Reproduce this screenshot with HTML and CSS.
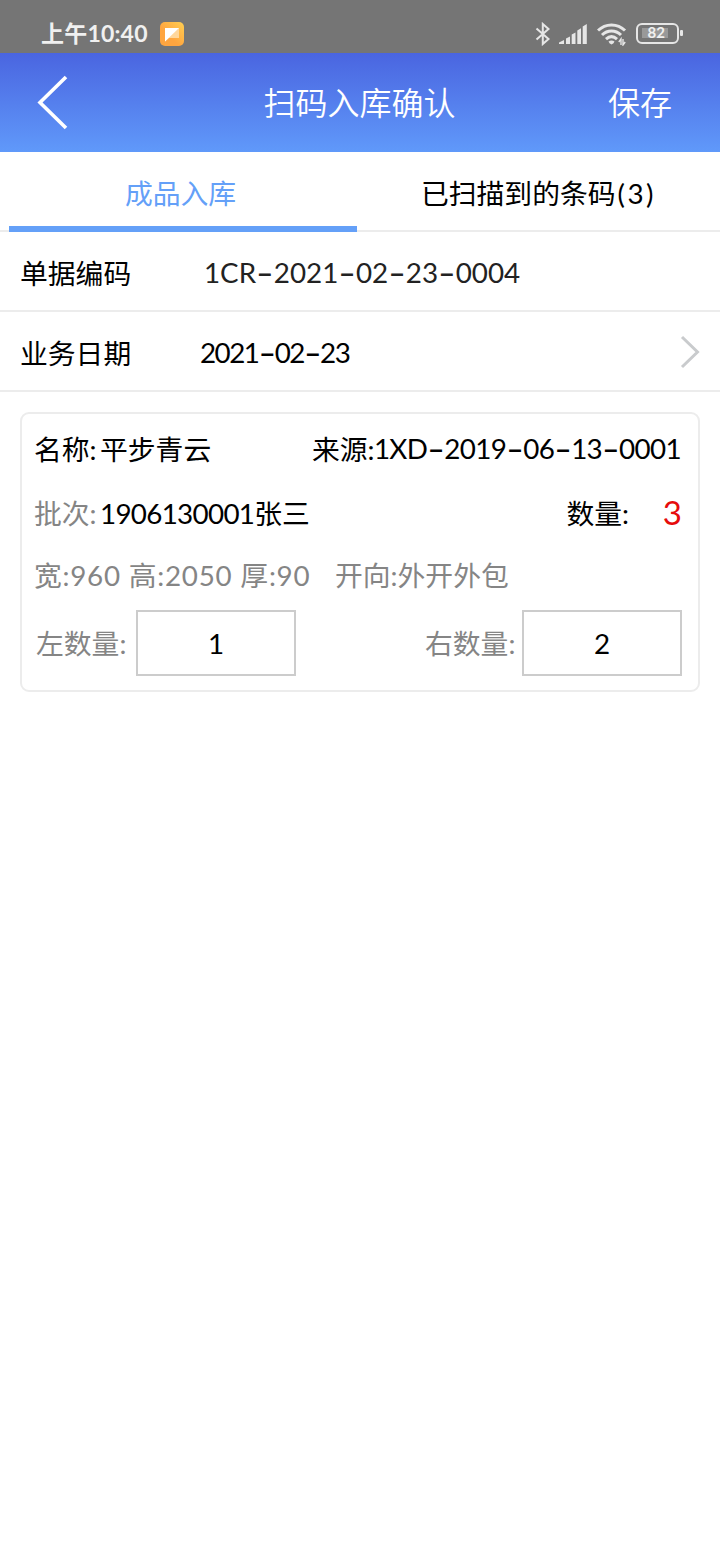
FILE: index.html
```html
<!DOCTYPE html>
<html lang="zh-CN">
<head>
    <meta charset="UTF-8">
    <meta name="viewport" content="width=device-width, initial-scale=1.0">
    <title>扫码入库确认</title>
    <link rel="stylesheet" href="styles.css">
</head>
<body>
    <div class="statusbar">
        <span class="clock">上午10:40</span>
        <svg class="app-icon" width="24" height="24" viewBox="0 0 24 24">
            <defs>
                <linearGradient id="orange" x1="0" y1="1" x2="1" y2="0">
                    <stop offset="0.4" stop-color="#ffa53f"/>
                    <stop offset="1" stop-color="#ffcf52"/>
                </linearGradient>
            </defs>
            <rect width="24" height="24" rx="5" fill="url(#orange)"/>
            <path d="M5 6H19V16H9L5 19.5Z" fill="#ffd79c"/>
            <path d="M5 6H19L5 19.5Z" fill="#fff"/>
        </svg>
        <div class="status-icons">
            <svg width="16" height="24" viewBox="0 0 16 24" fill="none" stroke="#e6e6e6" stroke-width="2">
                <path d="M1.500 6.500L13.500 17L7.800 22V2L13.500 7L1.500 17.500"/>
            </svg>
            <svg class="signal" width="28" height="20" viewBox="0 0 28 20" fill="#e6e6e6">
                <path d="M0 20V18.500L5 16V20ZM7 20V14.500L11 12.500V20ZM12.700 20V10.500L16.500 8.500V20ZM18.300 20V6.500L22 4.200V20ZM23.700 20V2.500L27.800 0V20Z"/>
            </svg>
            <svg class="wifi" width="30" height="24" viewBox="0 0 30 24" fill="none" stroke="#e6e6e6" stroke-width="3">
                <path d="M1 8.500C8.500 1 20.500 1 28 8.500"/>
                <path d="M5 13C10.500 7.700 18.500 7.700 24 13"/>
                <path d="M9 17.200C12.500 14 16.500 14 20 17.200"/>
                <path d="M11.500 19.500Q14.500 17.500 17.500 19.500Q17 21.500 14.500 22.500Q12 21.500 11.500 19.500Z" fill="#e6e6e6" stroke="none"/>
                <path d="M24 23V17L21.800 20M26 17V23L28.200 20" stroke-width="1.400"/>
            </svg>
            <div class="battery"><span>82</span></div>
        </div>
    </div>

    <div class="header">
        <svg class="back" width="32" height="56" viewBox="0 0 32 56" fill="none" stroke="#fff" stroke-width="3.600">
            <path d="M30 2L4 27.500L30 53"/>
        </svg>
        <span class="title">扫码入库确认</span>
        <span class="save">保存</span>
    </div>

    <div class="tabs">
        <div class="tab active">成品入库</div>
        <div class="tab">已扫描到的条码<span class="num">(3)</span></div>
    </div>

    <div class="row">
        <span class="row-label">单据编码</span>
        <span class="code">1CR<i>-</i>2021<i>-</i>02<i>-</i>23<i>-</i>0004</span>
    </div>
    <div class="row">
        <span class="row-label">业务日期</span>
        <span class="date">2021<i>-</i>02<i>-</i>23</span>
        <svg class="arrow" width="20" height="34" viewBox="0 0 20 34" fill="none" stroke="#c9cbcd" stroke-width="3">
            <path d="M2 2L17.500 17L2 32"/>
        </svg>
    </div>

    <div class="card">
        <div class="line">
            <span class="label">名称:</span>
            <span>平步青云</span>
            <span class="source">来源:</span>
            <span class="source-no">1XD<i>-</i>2019<i>-</i>06<i>-</i>13<i>-</i>0001</span>
        </div>
        <div class="line">
            <span class="label gray">批次:</span>
            <span><span class="batch">1906130001</span>张三</span>
            <span class="total">数量:</span>
            <span class="count">3</span>
        </div>
        <div class="line size gray">
            <span class="dims">宽:960 高:2050 厚:90</span>
            <span>开向:外开外包</span>
        </div>
        <div class="line inputs gray">
            <span class="left">左数量:</span>
            <input type="text" value="1">
            <span class="right">右数量:</span>
            <input type="text" value="2">
        </div>
    </div>
</body>
</html>
```
FILE: styles.css
```css
* {
    box-sizing: border-box;
}
body {
    margin: 0;
    min-height: 1560px;
    background-color: #fff;
    color: #000;
    font-family: Lato, "Noto Sans CJK SC", sans-serif;
    font-size: 27.8px;
    white-space: nowrap;
}
svg {
    display: block;
    flex: none;
}
.statusbar {
    display: flex;
    align-items: center;
    height: 53px;
    padding: 14px 37px 0 41px;
    background-color: #757575;
    color: #f0f0f0;
}
.clock {
    width: 119px;
    padding-bottom: 2px;
    font-size: 23px;
    font-weight: bold;
    letter-spacing: 0.2px;
    line-height: 36px;
}
.status-icons {
    display: flex;
    align-items: center;
    margin-left: auto;
}
.signal {
    margin-left: 8px;
}
.wifi {
    margin-left: 10px;
}
.battery {
    position: relative;
    width: 43px;
    height: 21px;
    margin: 0 4px 0 9px;
    padding: 3px 4px;
    border: 2.5px solid #e6e6e6;
    border-radius: 6px;
}
.battery span {
    display: block;
    width: 26px;
    height: 10px;
    background-color: #999;
    color: #f0f0f0;
    font-size: 15px;
    font-weight: bold;
    line-height: 9px;
    text-align: right;
    padding-right: 3px;
}
.battery::after {
    content: "";
    position: absolute;
    right: -6px;
    top: 5px;
    width: 3px;
    height: 6px;
    border-radius: 1px;
    background-color: #e6e6e6;
}
.header {
    display: grid;
    grid-template-columns: 1fr auto 1fr;
    align-items: center;
    height: 99px;
    padding: 0 48px 0 36px;
    background: linear-gradient(#4a65e0, #6099fa);
    color: #fff;
    font-size: 32px;
    font-weight: 350;
}
.title {
    margin-left: 11px;
    padding-bottom: 4px;
}
.save {
    padding-bottom: 4px;
    text-align: right;
}
.tabs {
    display: flex;
    height: 80px;
    padding-left: 9px;
    border-bottom: 2px solid #ececec;
}
.tab {
    width: 363px;
    height: 80px;
    line-height: 83px;
    text-align: center;
}
.tab.active {
    width: 348px;
    border-bottom: 6px solid #64a0f8;
    color: #64a0f8;
    padding-right: 5px;
}
.num {
    margin-left: 2px;
    letter-spacing: 2.5px;
}
.row {
    display: flex;
    align-items: center;
    height: 80px;
    padding: 2px 20px 0;
    border-bottom: 2px solid #ececec;
}
.row-label {
    width: 180px;
}
i {
    font-family: Inter, sans-serif;
    font-size: 39px;
    font-style: normal;
    font-weight: 300;
    line-height: 0;
    vertical-align: -4px;
}
.code {
    margin-left: 4px;
    color: #222;
}
.date {
    letter-spacing: -1.5px;
}
.arrow {
    margin-left: auto;
}
.card {
    height: 280px;
    margin: 20px 20px 0;
    padding: 2px 16px 0 12px;
    border: 2px solid #ececec;
    border-radius: 9px;
}
.line {
    display: flex;
    align-items: center;
    height: 64px;
}
.label {
    width: 66px;
}
.gray {
    color: #858585;
}
.source {
    width: 62px;
    margin-left: auto;
}
.source-no {
    margin-right: 1px;
    letter-spacing: -0.65px;
}
.batch {
    letter-spacing: -0.7px;
}
.total {
    margin-left: auto;
}
.count {
    width: 53px;
    color: #e60c0c;
    font-size: 33px;
    text-align: right;
}
.size {
    height: 60px;
}
.dims {
    width: 301px;
    letter-spacing: 0.75px;
}
.inputs {
    height: 78px;
}
.left {
    width: 102px;
    padding: 0 0 2px 2px;
}
.right {
    width: 97px;
    margin-left: auto;
    padding-bottom: 2px;
}
input {
    width: 160px;
    height: 66px;
    padding: 0;
    border: 2px solid #ccc;
    border-radius: 0;
    background-color: #fff;
    color: #000;
    font: inherit;
    text-align: center;
}
```
